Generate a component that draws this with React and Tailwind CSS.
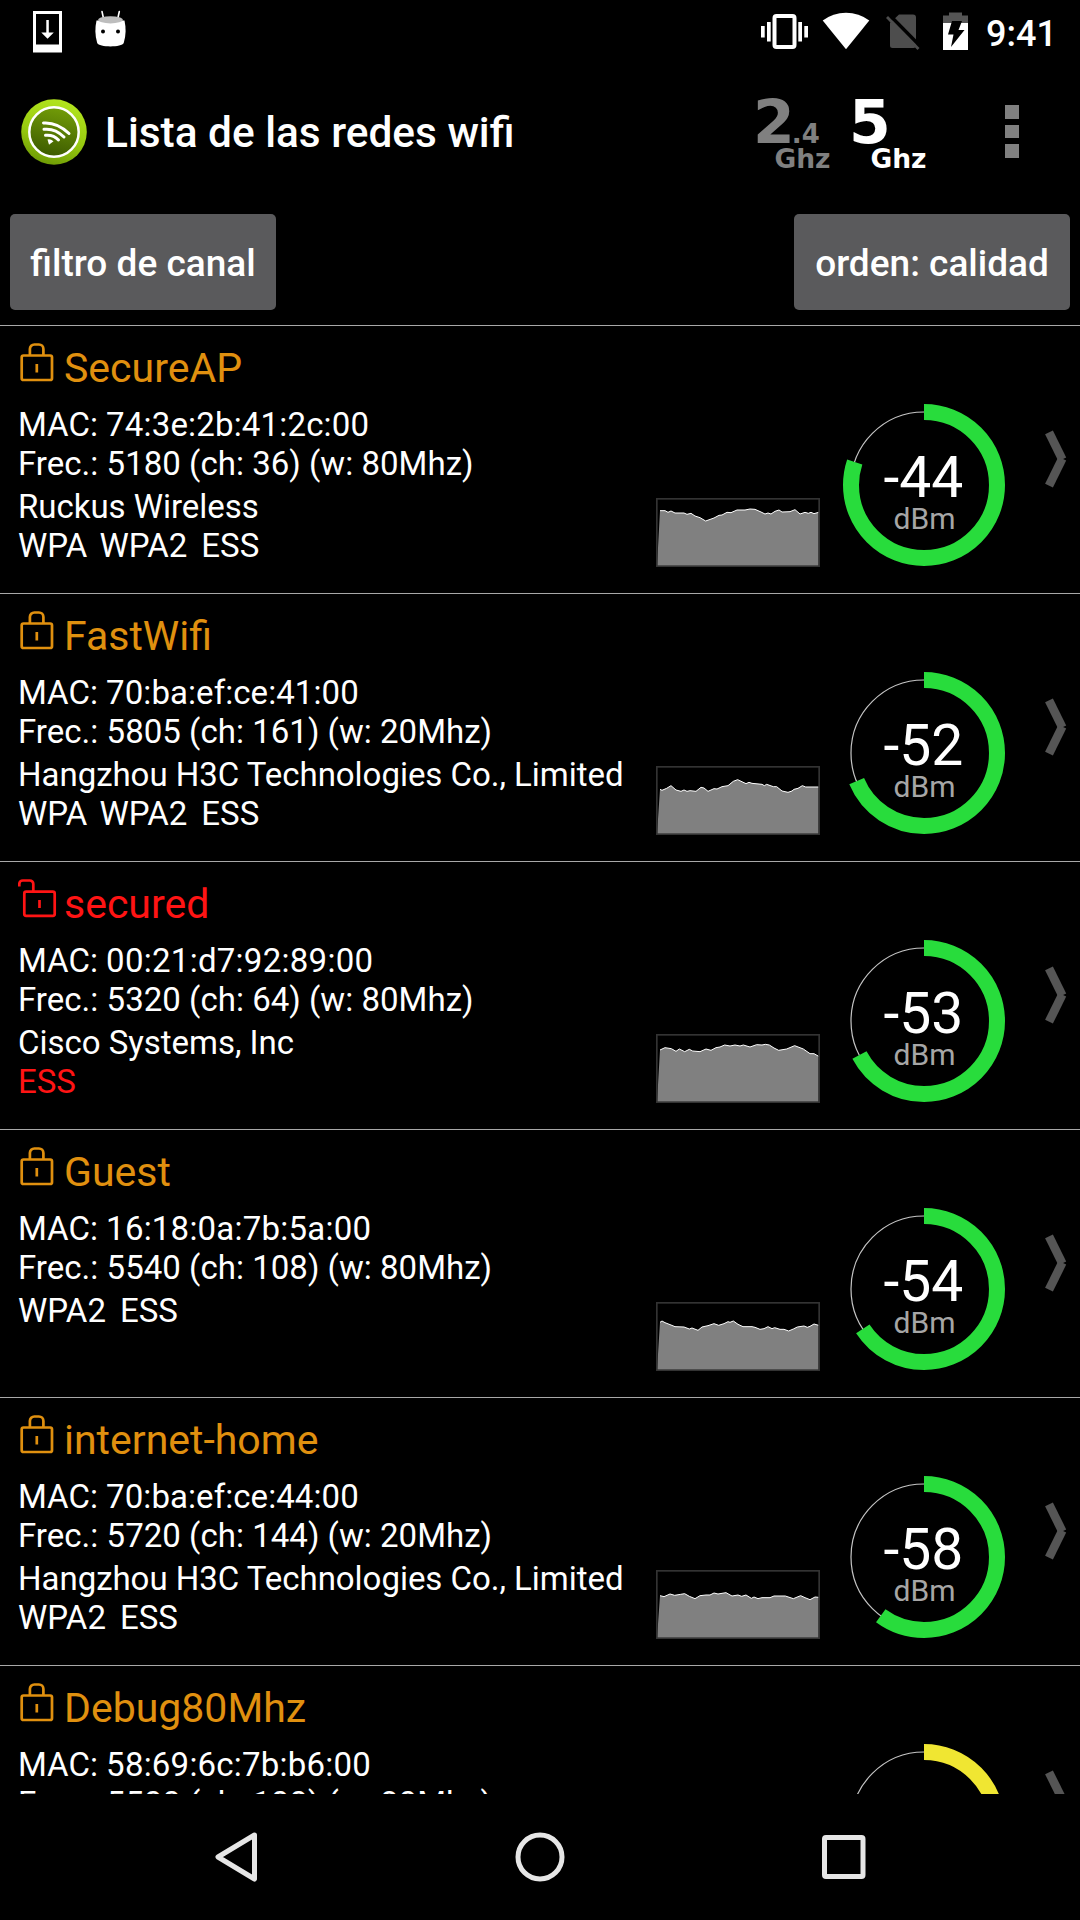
import clsx from 'clsx';

const NETWORKS = [
  {
    ssid: 'SecureAP',
    mac: '74:3e:2b:41:2c:00',
    macTracking: 'tracking-[0.170px]',
    freq: '5180 (ch: 36) (w: 80Mhz)',
    vendor: 'Ruckus Wireless',
    security: ['WPA', 'WPA2', 'ESS'],
    level: -44,
    history:
      '60,38 75,38 84,43 93,39 105,45 132,45 141,49 153,46 165,54 180,59 197,69 222,60 237,52 246,51 261,43 273,44 291,36 315,36 330,33 345,34 363,42 375,48 384,45 393,48 405,40 417,36 426,42 450,41 465,35 480,48 495,43 505,46 513,43 522,47 536,43',
  },
  {
    ssid: 'FastWifi',
    mac: '70:ba:ef:ce:41:00',
    macTracking: 'tracking-[0.070px]',
    freq: '5805 (ch: 161) (w: 20Mhz)',
    vendor: 'Hangzhou H3C Technologies Co., Limited',
    security: ['WPA', 'WPA2', 'ESS'],
    level: -52,
    history:
      '60,70 66,73 80,67 93,59 108,72 123,76 132,72 141,76 150,74 168,76 183,64 192,66 204,76 222,68 231,69 246,62 264,59 280,46 293,41 318,53 327,49 336,52 366,55 373,59 380,55 400,62 410,62 426,75 444,79 456,75 462,70 474,67 487,59 497,63 536,63',
  },
  {
    ssid: 'secured',
    mac: '00:21:d7:92:89:00',
    macTracking: 'tracking-[0.270px]',
    freq: '5320 (ch: 64) (w: 80Mhz)',
    vendor: 'Cisco Systems, Inc',
    security: ['ESS'],
    open: true,
    level: -53,
    history:
      '60,48 75,41 94,44 108,52 118,45 134,53 148,46 158,51 180,53 198,45 213,49 228,41 240,39 254,33 270,36 285,33 300,36 310,33 330,39 350,32 366,33 376,31 388,33 402,42 416,49 440,45 464,35 490,45 510,59 522,59 536,67',
  },
  {
    ssid: 'Guest',
    mac: '16:18:0a:7b:5a:00',
    macTracking: 'tracking-[0.220px]',
    freq: '5540 (ch: 108) (w: 80Mhz)',
    security: ['WPA2', 'ESS'],
    level: -54,
    history:
      '60,61 66,57 75,62 93,69 105,74 132,75 148,81 156,78 174,85 186,75 204,71 222,65 236,70 252,65 264,59 270,61 280,57 294,67 309,74 336,74 345,76 360,82 372,80 384,74 396,80 404,77 420,82 432,82 446,87 460,81 472,75 492,72 502,76 510,73 522,66 536,70',
  },
  {
    ssid: 'internet-home',
    mac: '70:ba:ef:ce:44:00',
    macTracking: 'tracking-[0.070px]',
    freq: '5720 (ch: 144) (w: 20Mhz)',
    vendor: 'Hangzhou H3C Technologies Co., Limited',
    security: ['WPA2', 'ESS'],
    level: -58,
    history:
      '60,77 72,80 90,72 104,76 122,73 134,71 148,79 165,86 180,77 198,75 210,75 222,69 234,72 258,68 276,78 294,75 305,79 318,75 334,85 342,81 354,86 366,83 390,83 402,78 436,78 460,86 482,77 495,83 510,89 525,81 536,82',
  },
  {
    ssid: 'Debug80Mhz',
    mac: '58:69:6c:7b:b6:00',
    macTracking: 'tracking-[0.220px]',
    freq: '5500 (ch: 100) (w: 80Mhz)',
    security: [],
    level: -66,
  },
];

/**
 * Android status bar
 */
const StatusBar = () => (
  <div className="h-[63px] shrink-0 flex items-start">
    <svg className="w-[140px] h-[63px]" viewBox="0 0 140 63">
      <path fill="#fff" fillRule="evenodd" d="M33 11h29v41.500h-29zM36 14v30.500h23v-30.500z" />
      <path fill="#fff" d="M46.300 20h2.500v12.500h5l-6.250 6.300l-6.250-6.300h5z" />
      <path stroke="#fff" strokeWidth="1.600" strokeLinecap="round" d="M102 11.500l1.500 7M119.300 11.500l-1.500 7" />
      <path fill="#fff" d="M96.500 20.500h28c1.600 7 1.600 15-.8 22.500c-1.500 4.500-25 4.500-26.500 0c-2.300-7.500-2.300-15.500-.7-22.500z" />
      <ellipse cx="110.500" cy="19.800" rx="12.300" ry="3.600" fill="#bdbdbd" />
      <circle cx="103" cy="31.500" r="2" />
      <circle cx="118" cy="31.500" r="2" />
    </svg>
    <svg className="w-[220px] h-[63px] ml-auto" viewBox="755 0 220 63">
      {/* Vibrate */}
      <rect x="774.500" y="16" width="20" height="31" rx="2" fill="none" stroke="#fff" strokeWidth="4" />
      <path fill="#fff" d="M761 26h3.700v11.500h-3.700zM767 22h3.700v19.500h-3.700zM798.300 22h3.700v19.500h-3.700zM804.300 26h3.700v11.500h-3.700z" />
      {/* Wifi */}
      <path fill="#fff" d="M846 49.300L822.700 20.500Q833 12.700 846 12.700T869.300 20.500z" />
      {/* No SIM */}
      <path fill="#4d4d4d" d="M899 14.500h14a3 3 0 0 1 3 3v28.500a2.500 2.500 0 0 1-2.500 2h-21a2.500 2.500 0 0 1-2.500-2.500v-22.500z" />
      <path stroke="#000" strokeWidth="3.600" d="M888 13.500l32 32.500" />
      <path stroke="#4d4d4d" strokeWidth="2.800" d="M887 17l31.500 32" />
      {/* Battery */}
      <path fill="#555" d="M949 12.500h13v3h6v8h-25v-8h6z" />
      <path fill="#fff" d="M943 23h25v27h-25z" />
      <path fill="#000" d="M952 21h10l-3.500 9h6l-13.500 17l2.500-12.500h-5.500z" />
    </svg>
    <span className="w-[105px] pl-[11px] pt-[13px] text-[36px] leading-[42px] font-medium">9:41</span>
  </div>
);

const AppIcon = () => (
  <svg className="w-[66px] h-[66px]" viewBox="0 0 66 66">
    <defs>
      <linearGradient id="rim" x1="0.700" y1="0" x2="0.400" y2="1">
        <stop offset="0" stopColor="#b4e61e" />
        <stop offset="0.600" stopColor="#96c80f" />
        <stop offset="1" stopColor="#6e9b05" />
      </linearGradient>
      <linearGradient id="disc" x1="0.600" y1="0" x2="0.400" y2="1">
        <stop offset="0" stopColor="#729c08" />
        <stop offset="1" stopColor="#3c5a00" />
      </linearGradient>
    </defs>
    <circle cx="33" cy="33" r="32.800" fill="url(#rim)" />
    <circle cx="33" cy="33" r="24.700" fill="url(#disc)" stroke="#fff" strokeWidth="2.500" />
    <g fill="none" stroke="#fff" strokeWidth="3" strokeLinecap="round">
      <path d="M22.500 24Q36 23 48 34.500" />
      <path d="M23 30.300Q34 29 43 38" />
      <path d="M24.500 36.300Q32.500 35.500 37.500 41" />
    </g>
    <path fill="#fff" d="M26.500 40.500q3-.8 6 1.800l-4.500 3.500z" />
  </svg>
);

const BandLabel = ({ main, decimal, active }) => (
  <div
    className={clsx(
      "w-[96px] h-[76px] font-['DejaVu_Sans'] font-bold",
      active ? 'text-white' : 'text-[#808080]'
    )}
  >
    <div className="h-[46px] text-[60px] leading-[46px] flex items-baseline">
      {main}
      <span className="text-[26px] -ml-[3px]">{decimal}</span>
    </div>
    <div className="pl-[21.500px] text-[26.500px] leading-[27px]">Ghz</div>
  </div>
);

const LockIcon = ({ open }) => (
  <svg
    className="w-[46px] h-[40px]"
    viewBox="18 17 46 40"
    fill="none"
    stroke={open ? '#ff1414' : '#e0900f'}
    strokeWidth="2.700"
  >
    {open ? (
      <>
        <rect x="24.300" y="30.600" width="30.400" height="24.200" rx="1.800" />
        <path d="M19.300 25.500v-2.500a3.500 3.500 0 0 1 3.500-3.500h7a3.500 3.500 0 0 1 3.500 3.500v7.500" />
        <path d="M39.500 39v8" />
      </>
    ) : (
      <>
        <rect x="21.700" y="30.500" width="30.300" height="24.500" rx="1.800" />
        <path d="M29.900 30.500v-6.500a4.500 4.500 0 0 1 4.500-4.500h4.500a4.500 4.500 0 0 1 4.500 4.500v6.500" />
        <path d="M36.800 39v8.500" />
      </>
    )}
  </svg>
);

const HistoryChart = ({ points }) => (
  <svg className="w-[164px] h-[69px]" viewBox="48 0 492 207">
    <polygon points={`51,204 ${points} 536,204`} fill="#808080" />
    <polyline points={points} fill="none" stroke="#fff" strokeWidth="3" />
    <rect x="50.500" y="2.500" width="487" height="202" fill="none" stroke="#333" strokeWidth="5" />
  </svg>
);

const Gauge = ({ level }) => {
  // -100 dBm is empty, -30 dBm is the full circle
  const ratio = (level + 100) / 70;
  const length = 2 * Math.PI * 73;

  return (
    <svg className="w-[162px] h-[162px]" viewBox="0 0 162 162">
      <circle cx="81" cy="81" r="73" fill="none" stroke="#c4c4c4" strokeWidth="1.200" />
      <circle
        cx="81"
        cy="81"
        r="73"
        fill="none"
        stroke={level > -60 ? '#28dc3c' : '#f0e632'}
        strokeWidth="16"
        strokeDasharray={`${length * ratio} ${length}`}
        transform="rotate(-90 81 81)"
      />
      <text x="80.500" y="93" textAnchor="middle" fill="#fff" className="text-[57px]">
        {level}
      </text>
      <text x="81.500" y="124.500" textAnchor="middle" fill="#a6a6a6" className="text-[30px]">
        dBm
      </text>
    </svg>
  );
};

const Chevron = () => (
  <svg className="w-[28px] h-[60px]" viewBox="1042 104 28 60" fill="none" stroke="#555" strokeWidth="8.700">
    <path d="M1049 107.300L1062.300 134.300" />
    <path d="M1062.300 133.700L1049 160.700" />
  </svg>
);

const NetworkRow = ({ network }) => (
  <li className="h-[268px] shrink-0 flex items-start border-t border-[#a8a8a8]">
    <div className="w-[656px] pl-[18px] pt-[16px] text-[33px] leading-[39px] whitespace-pre">
      <div className="h-[63px] flex items-start">
        <LockIcon open={network.open} />
        <span
          className={clsx(
            'pt-[2px] text-[41px] leading-[49px]',
            network.open ? 'text-[#ff1414]' : 'text-[#e0900f]'
          )}
        >
          {network.ssid}
        </span>
      </div>
      <p>
        MAC: <span className={clsx('[font-kerning:none]', network.macTracking)}>{network.mac}</span>
      </p>
      <p className="tracking-[0.030px]">Frec.: {network.freq}</p>
      <div className="mt-[4px]">
        {network.vendor && <p className="tracking-[-0.030px]">{network.vendor}</p>}
        <p className={clsx('flex', network.open && 'text-[#ff1414]')}>
          {network.security.map((flag) => (
            <span key={flag} className={flag === 'WPA' ? 'mr-[12px]' : 'mr-[14px]'}>
              {flag}
            </span>
          ))}
        </p>
      </div>
    </div>
    <div className="w-[164px] pt-[172px]">
      {network.history && <HistoryChart points={network.history} />}
    </div>
    <div className="ml-[23px] pt-[78px]">
      <Gauge level={network.level} />
    </div>
    <div className="ml-[37px] pt-[103px]">
      <Chevron />
    </div>
  </li>
);

const NavBar = () => (
  <nav className="flex-1 flex justify-between items-start pt-[35px] pl-[212px] pr-[211px]">
    <svg className="w-[50px] h-[56px]" viewBox="0 0 50 56" fill="none" stroke="#e6e6e6" strokeWidth="5" strokeLinejoin="round">
      <path d="M42.500 6L6 28L42.500 50z" />
    </svg>
    <svg className="w-[56px] h-[56px]" viewBox="0 0 56 56" fill="none" stroke="#e6e6e6" strokeWidth="5">
      <circle cx="27" cy="28" r="22" />
    </svg>
    <svg className="w-[50px] h-[56px]" viewBox="0 0 50 56" fill="none" stroke="#e6e6e6" strokeWidth="5">
      <rect x="5.500" y="8.500" width="38.500" height="39" rx="1.500" />
    </svg>
  </nav>
);

const App = () => (
  <div className="w-[1080px] h-[1920px] overflow-hidden flex flex-col bg-black text-white font-['Roboto',sans-serif]">
    <StatusBar />

    {/* Action bar */}
    <header className="h-[151px] shrink-0 flex items-start pl-[21px]">
      <div className="pt-[36px]">
        <AppIcon />
      </div>
      <h1 className="pl-[18px] pt-[45px] text-[42.400px] leading-[49px] font-medium">Lista de las redes wifi</h1>
      <div className="ml-auto pt-[36px] flex">
        <BandLabel main="2" decimal=".4" />
        <BandLabel main="5" active />
      </div>
      <div className="ml-[60px] mr-[61px] pt-[42px] flex flex-col gap-[6px]">
        <span className="w-[14px] h-[13.500px] bg-[#808080]" />
        <span className="w-[14px] h-[13.500px] bg-[#808080]" />
        <span className="w-[14px] h-[13.500px] bg-[#808080]" />
      </div>
    </header>

    {/* Filter and sort */}
    <div className="h-[111px] shrink-0 px-[10px] flex justify-between items-start text-[37px] font-medium">
      <button className="w-[266px] h-[96px] pt-[3px] rounded-[5px] bg-[#5a5a5c]">filtro de canal</button>
      <button className="w-[276px] h-[96px] pt-[3px] rounded-[5px] bg-[#5a5a5c]">orden: calidad</button>
    </div>

    <ul className="h-[1469px] shrink-0 overflow-hidden flex flex-col">
      {NETWORKS.map((network) => (
        <NetworkRow key={network.mac} network={network} />
      ))}
    </ul>

    <NavBar />
  </div>
);

export default App;
